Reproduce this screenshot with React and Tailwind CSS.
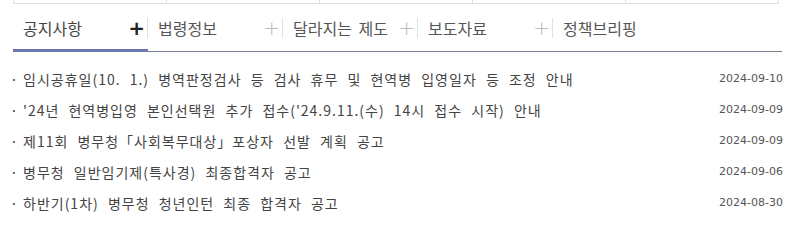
export default function App() {
  const tabs = [
    { label: "공지사항", active: true },
    { label: "법령정보" },
    { label: "달라지는 제도" },
    { label: "보도자료" },
    { label: "정책브리핑", last: true },
  ];
  const items = [
    ["임시공휴일(10. 1.) 병역판정검사 등 검사 휴무 및 현역병 입영일자 등 조정 안내", "2024-09-10"],
    ["'24년 현역병입영 본인선택원 추가 접수('24.9.11.(수) 14시 접수 시작) 안내", "2024-09-09"],
    ["제11회 병무청「사회복무대상」포상자 선발 계획 공고", "2024-09-09"],
    ["병무청 일반임기제(특사경) 최종합격자 공고", "2024-09-06"],
    ["하반기(1차) 병무청 청년인턴 최종 합격자 공고", "2024-08-30"],
  ];
  return (
    <div className="w-[792px] h-[235px] bg-white overflow-hidden" style={{ fontFamily: '"Noto Sans CJK KR", "Noto Sans", sans-serif' }}>
      <div className="ml-[13px] w-[766px] h-[4px] flex border-l border-r border-b border-[#dde1e7]">
        <div className="flex-1 border-r border-[#dde1e7]" />
        <div className="flex-1 border-r border-[#dde1e7]" />
        <div className="flex-1 border-r border-[#dde1e7]" />
        <div className="flex-1 border-r border-[#dde1e7]" />
        <div className="flex-1" />
      </div>
      <div className="ml-[13px] w-[769px] h-[48px] flex border-b border-[#7b8090]">
        {tabs.map((t, i) => (
          <div key={i} className="relative w-[135px] h-full flex items-center justify-between pl-[10px]">
            <span className={"text-[16px] [word-spacing:3px] " + (t.active ? "text-[#444]" : "text-[#555]")}>{t.label}</span>
            {!t.last && (
              <div className="flex items-center h-full">
                <span className={"text-[20px] leading-none mr-[2px] " + (t.active ? "text-[#222] font-bold" : "text-[#bbb] font-light")} style={{ fontFamily: '"DejaVu Sans", sans-serif' }}>+</span>
                <span className="w-px h-[20px] bg-[#e0e0e0]" />
              </div>
            )}
            {t.active && <div className="absolute left-0 right-0 bottom-[-1px] h-[3px] bg-[#6c78ad]" />}
          </div>
        ))}
      </div>
      <ul className="mt-[12px]">
        {items.map(([text, date], i) => (
          <li key={i} className="h-[31px] flex items-center justify-between pl-[10px] pr-[9px]">
            <span className="text-[14px] text-[#444] whitespace-nowrap tracking-[1px] [word-spacing:5px]">
              <span className="inline-block w-[13px]">·</span>
              {text}
            </span>
            <span className="text-[11px] text-[#555]" style={{ fontFamily: '"DejaVu Sans", sans-serif' }}>{date}</span>
          </li>
        ))}
      </ul>
    </div>
  );
}
